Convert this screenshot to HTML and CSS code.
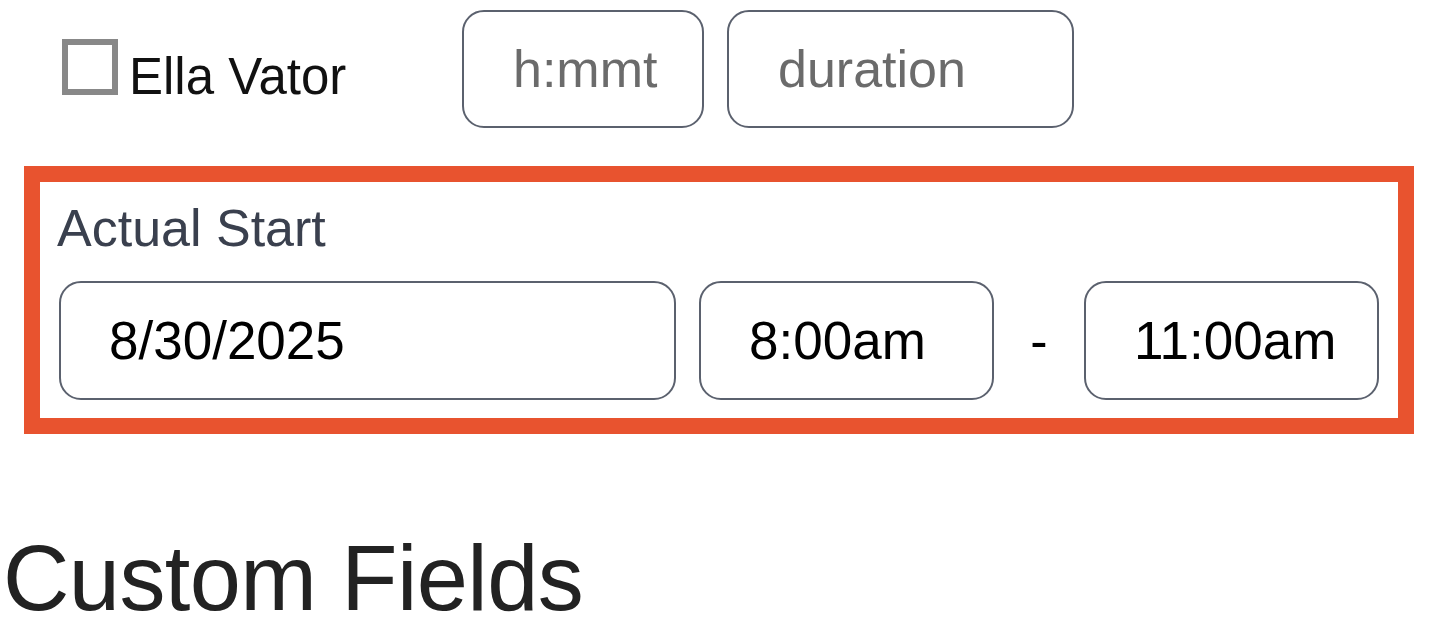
FILE: index.html
```html
<!DOCTYPE html>
<html lang="en">
<head>
<meta charset="utf-8">
<title>Actual Start</title>
<link rel="stylesheet" href="styles.css">
</head>
<body>
  <div class="top-row">
    <label class="check-group">
      <span class="checkbox"></span>
      <span class="check-label">Ella Vator</span>
    </label>
    <input class="field field-short" type="text" placeholder="h:mmt">
    <input class="field field-duration" type="text" placeholder="duration">
  </div>

  <section class="highlight">
    <div class="section-label">Actual Start</div>
    <div class="date-row">
      <input class="field field-date" type="text" value="8/30/2025">
      <input class="field field-time" type="text" value="8:00am">
      <span class="dash">-</span>
      <input class="field field-time" type="text" value="11:00am">
    </div>
  </section>

  <h2 class="heading">Custom Fields</h2>
</body>
</html>
```

FILE: styles.css
```css
html, body {
  margin: 0;
  padding: 0;
  background: #ffffff;
}

body {
  font-family: "Liberation Sans", Arial, Helvetica, sans-serif;
  color: #000;
  width: 1444px;
  height: 634px;
  overflow: hidden;
}

.top-row {
  display: flex;
  align-items: flex-start;
  padding: 10px 0 0 62px;
  gap: 23px;
}

.check-group {
  display: flex;
  align-items: flex-end;
  width: 377px;
  margin-top: 29px;
  gap: 11px;
}

.checkbox {
  display: block;
  box-sizing: border-box;
  width: 56px;
  height: 56px;
  border: 6px solid #888888;
  background: #fff;
  flex: none;
}

.check-label {
  font-size: 51px;
  line-height: 36px;
  color: #111;
  white-space: nowrap;
}

.field {
  box-sizing: border-box;
  height: 118px;
  border: 2px solid #5b616e;
  border-radius: 22px;
  background: #fff;
  font-family: "Liberation Sans", Arial, Helvetica, sans-serif;
  font-size: 53px;
  color: #000;
  padding: 0 0 0 48px;
  margin: 0;
  outline: none;
}

.field::placeholder {
  color: #6b6b6b;
  opacity: 1;
}

.field-short {
  width: 242px;
  font-size: 52px;
  padding-left: 49px;
}

.field-duration {
  width: 347px;
  font-size: 52px;
  padding-left: 49px;
}

.highlight {
  box-sizing: border-box;
  width: 1390px;
  height: 268px;
  margin: 38px 0 0 24px;
  border: 16px solid #e8532f;
  padding: 20px 18px 18px 17px;
}

.section-label {
  font-size: 52px;
  line-height: 52px;
  color: #3a404e;
}

.date-row {
  display: flex;
  align-items: center;
  margin-top: 27px;
  padding-left: 2px;
}

.field-date {
  width: 617px;
  height: 119px;
  margin-right: 23px;
}

.field-time {
  width: 295px;
  height: 119px;
}

.dash {
  width: 90px;
  text-align: center;
  font-size: 52px;
  color: #000;
}

.heading {
  margin: 98px 0 0 0;
  padding-left: 3px;
  font-size: 92px;
  line-height: 92px;
  font-weight: 400;
  letter-spacing: -0.6px;
  color: #222;
}
```
